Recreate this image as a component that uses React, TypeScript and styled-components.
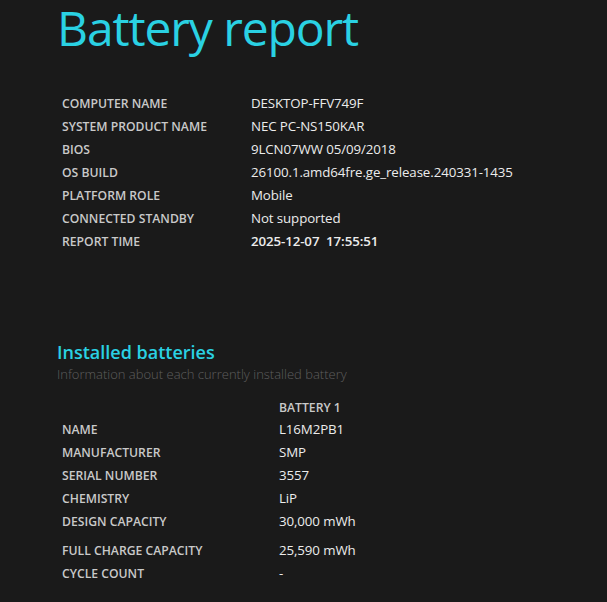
import React from "react";
import styled, { createGlobalStyle } from "styled-components";

const Global = createGlobalStyle`
  html, body { margin: 0; padding: 0; background: #1a1a1a; }
  body { font-family: "Open Sans", "Noto Sans", sans-serif; color: #e6e6e6; }
`;

const Page = styled.div`
  width: 607px;
  height: 602px;
  overflow: hidden;
  background: #1a1a1a;
  padding: 0 0 0 57px;
  box-sizing: border-box;
`;

const Title = styled.h1`
  margin: 0;
  font-weight: 400;
  font-size: 48px;
  line-height: 62px;
  margin-top: -3px;
  color: #2ad1e3;
  letter-spacing: -1.1px;
`;

const InfoTable = styled.div<{ $top: number; $labelWidth: number }>`
  display: grid;
  grid-template-columns: ${(p) => p.$labelWidth}px auto;
  margin-top: ${(p) => p.$top}px;
  padding-left: 5px;
`;

const Label = styled.div<{ $gap?: number }>`
  font-size: 12.2px;
  font-weight: 600;
  color: #c9c9c9;
  line-height: 23px;
  height: 23px;
  margin-top: ${(p) => p.$gap ?? 0}px;
  white-space: nowrap;
`;

const Value = styled.div<{ $bold?: boolean; $gap?: number }>`
  font-size: 13.3px;
  font-weight: ${(p) => (p.$bold ? 600 : 400)};
  color: #ececec;
  line-height: 23px;
  height: 23px;
  margin-top: ${(p) => p.$gap ?? 0}px;
  white-space: nowrap;
  letter-spacing: -0.1px;
`;

const ColHead = styled.div`
  font-size: 12.2px;
  font-weight: 600;
  color: #c9c9c9;
  line-height: 20px;
  height: 20px;
`;

const SectionTitle = styled.h2`
  margin: 87px 0 0 0;
  font-size: 18px;
  font-weight: 600;
  line-height: 24px;
  color: #2ad1e3;
`;

const SectionSub = styled.div`
  margin-top: 1px;
  font-size: 13px;
  font-weight: 300;
  color: #5e5e5e;
  line-height: 18px;
`;

const systemRows: [string, string, boolean?][] = [
  ["COMPUTER NAME", "DESKTOP-FFV749F"],
  ["SYSTEM PRODUCT NAME", "NEC PC-NS150KAR"],
  ["BIOS", "9LCN07WW 05/09/2018"],
  ["OS BUILD", "26100.1.amd64fre.ge_release.240331-1435"],
  ["PLATFORM ROLE", "Mobile"],
  ["CONNECTED STANDBY", "Not supported"],
  ["REPORT TIME", "2025-12-07\u00a0\u00a017:55:51", true],
];

const batteryRows: [string, string, number?][] = [
  ["NAME", "L16M2PB1"],
  ["MANUFACTURER", "SMP"],
  ["SERIAL NUMBER", "3557"],
  ["CHEMISTRY", "LiP"],
  ["DESIGN CAPACITY", "30,000 mWh"],
  ["FULL CHARGE CAPACITY", "25,590 mWh", 6],
  ["CYCLE COUNT", "-"],
];

export default function App() {
  return (
    <Page>
      <Global />
      <Title>Battery report</Title>
      <InfoTable $top={33} $labelWidth={189}>
        {systemRows.map(([k, v, b]) => (
          <React.Fragment key={k}>
            <Label>{k}</Label>
            <Value $bold={b}>{v}</Value>
          </React.Fragment>
        ))}
      </InfoTable>
      <SectionTitle>Installed batteries</SectionTitle>
      <SectionSub>Information about each currently installed battery</SectionSub>
      <InfoTable $top={15} $labelWidth={217}>
        <div />
        <ColHead>BATTERY 1</ColHead>
        {batteryRows.map(([k, v, g]) => (
          <React.Fragment key={k}>
            <Label $gap={g}>{k}</Label>
            <Value $gap={g}>{v}</Value>
          </React.Fragment>
        ))}
      </InfoTable>
    </Page>
  );
}
